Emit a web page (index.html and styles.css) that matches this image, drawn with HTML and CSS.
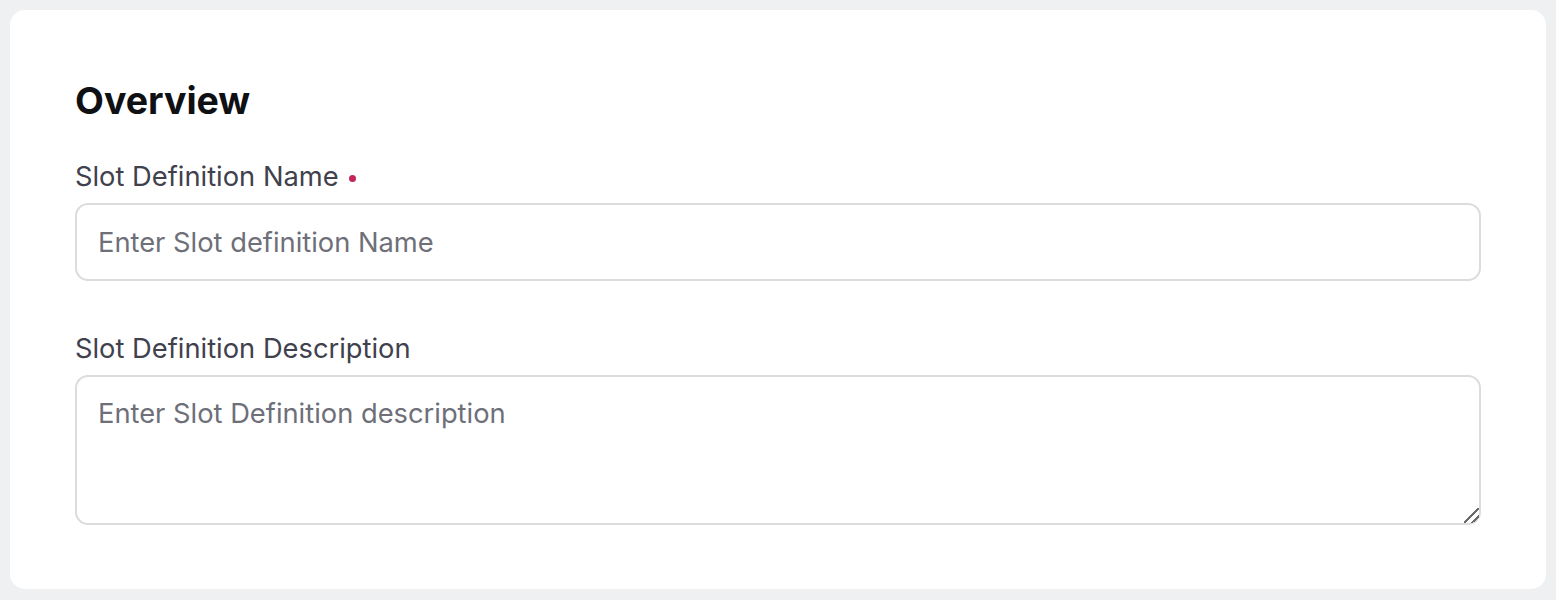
FILE: index.html
```html
<!DOCTYPE html>
<html lang="en">
<head>
<meta charset="utf-8">
<title>Overview</title>
<link rel="stylesheet" href="styles.css">
</head>
<body>
<main class="card">
  <h2 class="title">Overview</h2>
  <div class="field">
    <label class="label" for="slot-name">Slot Definition Name<span class="required" aria-hidden="true"></span></label>
    <input class="input" id="slot-name" type="text" placeholder="Enter Slot definition Name">
  </div>
  <div class="field field-desc">
    <label class="label" for="slot-desc">Slot Definition Description</label>
    <textarea class="input textarea" id="slot-desc" placeholder="Enter Slot Definition description"></textarea>
  </div>
</main>
</body>
</html>
```
FILE: styles.css
```css
html, body {
  margin: 0;
  background: #eff0f2;
}
body {
  padding: 10px;
  font-family: Inter, "Noto Sans", sans-serif;
}
.card {
  background: #ffffff;
  border-radius: 15px;
  padding: 68px 65px 64px;
  box-sizing: border-box;
}
.title {
  margin: 0 0 37px;
  font-size: 37.5px;
  line-height: 45px;
  font-weight: 700;
  color: #0f1014;
}
.field {
  display: flex;
  flex-direction: column;
}
.field-desc {
  margin-top: 51px;
}
.label {
  display: flex;
  align-items: center;
  font-size: 27.3px;
  line-height: 34px;
  color: #40414d;
  margin-bottom: 9px;
}
.required {
  width: 7px;
  height: 7px;
  border-radius: 50%;
  background: #c3245c;
  margin-left: 10px;
  margin-top: 2px;
}
.input {
  box-sizing: border-box;
  width: 100%;
  height: 78px;
  margin: 0;
  padding: 20px 21px;
  border: 2px solid #dcdcdf;
  border-radius: 13px;
  background: #fff;
  font-family: Inter, "Noto Sans", sans-serif;
  font-size: 27.3px;
  line-height: 34px;
  color: #1f2029;
  outline: none;
}
.input::placeholder {
  color: #6e6f79;
  opacity: 1;
}
.textarea {
  height: 150px;
  resize: vertical;
  display: block;
}
.textarea::-webkit-resizer {
  background: linear-gradient(135deg,
    transparent 0, transparent 46%,
    #6a6a6a 46%, #6a6a6a 54%,
    transparent 54%, transparent 72%,
    #6a6a6a 72%, #6a6a6a 80%,
    transparent 80%);
}
.textarea::-webkit-scrollbar {
  width: 14px;
  height: 14px;
}
```
